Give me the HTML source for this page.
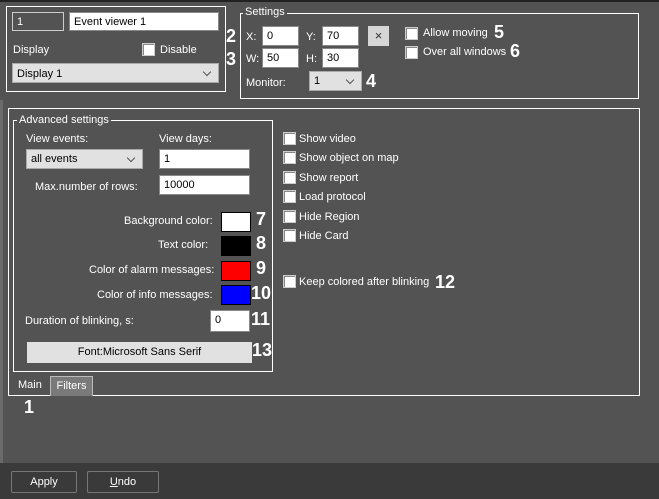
<!DOCTYPE html><html><head><style>
*{margin:0;padding:0;box-sizing:border-box}
body{width:659px;height:499px;background:#535353;font-family:"Liberation Sans",sans-serif;font-size:11px;color:#fff;position:relative;overflow:hidden}
.a{position:absolute}
.box{position:absolute;border:1px solid #fff}
.in{position:absolute;background:#fff;color:#000;border:1px solid #888;padding:2px 4px;font-size:11px;height:20px;line-height:15px}
.dd{position:absolute;background:#e1e1e1;color:#000;border:1px solid #aaa;padding:2px 4px;font-size:11px;line-height:15px}
.dd:after{content:"";position:absolute;right:8px;top:5px;width:5px;height:5px;border-right:1px solid #555;border-bottom:1px solid #555;transform:rotate(45deg)}
.cb{position:absolute;width:13px;height:13px;background:#fff;border:1px solid #ccc;box-shadow:inset 1px 1px 0 #888}
.n{position:absolute;font-weight:bold;font-size:18px;color:#fff}
.lbl{position:absolute;background:#535353;padding:0 2px}
</style></head><body>
<div class="a" style="left:0;top:0;width:659px;height:2px;background:#222"></div>
<div class="a" style="left:0;top:100px;width:3px;height:363px;background:#6a6a6a"></div>
<div class="box" style="left:6px;top:6px;width:220px;height:86px"></div>
<div class="in" style="left:12px;top:12px;width:52px;height:19px;background:#535353;color:#fff;border:1px solid #ccc">1</div>
<div class="in" style="left:69px;top:12px;width:150px;height:19px">Event viewer 1</div>
<div class="a" style="left:13px;top:44px">Display</div>
<div class="cb" style="left:142px;top:43px"></div>
<div class="a" style="left:160px;top:44px">Disable</div>
<div class="dd" style="left:12px;top:63px;width:207px;height:20px;padding-top:3px">Display 1</div>
<div class="box" style="left:240px;top:13px;width:399px;height:86px"></div>
<div class="lbl" style="left:243px;top:6px">Settings</div>
<div class="n" style="left:226px;top:26px">2</div>
<div class="n" style="left:226px;top:49px">3</div>
<div class="a" style="left:246px;top:31px">X:</div>
<div class="in" style="left:262px;top:26px;width:37px">0</div>
<div class="a" style="left:306px;top:31px">Y:</div>
<div class="in" style="left:322px;top:26px;width:37px">70</div>
<div class="a" style="left:368px;top:26px;width:21px;height:20px;background:#d6d6d6;color:#333;text-align:center;line-height:20px;font-size:13px">×</div>
<div class="a" style="left:246px;top:53px">W:</div>
<div class="in" style="left:262px;top:48px;width:37px">50</div>
<div class="a" style="left:306px;top:53px">H:</div>
<div class="in" style="left:322px;top:48px;width:37px">30</div>
<div class="a" style="left:246px;top:77px">Monitor:</div>
<div class="dd" style="left:309px;top:71px;width:53px;height:20px">1</div>
<div class="n" style="left:366px;top:71px">4</div>
<div class="cb" style="left:405px;top:27px"></div><div class="a" style="left:423px;top:27px">Allow moving</div><div class="n" style="left:494px;top:22px">5</div>
<div class="cb" style="left:405px;top:46px"></div><div class="a" style="left:423px;top:46px">Over all windows</div><div class="n" style="left:510px;top:41px">6</div>
<div class="box" style="left:8px;top:108px;width:632px;height:288px"></div>
<div class="box" style="left:13px;top:120px;width:260px;height:252px"></div>
<div class="lbl" style="left:17px;top:114px">Advanced settings</div>
<div class="a" style="left:26px;top:133px">View events:</div>
<div class="a" style="left:159px;top:133px">View days:</div>
<div class="dd" style="left:26px;top:149px;width:117px;height:20px">all events</div>
<div class="in" style="left:159px;top:149px;width:91px">1</div>
<div class="a" style="left:35px;top:181px">Max.number of rows:</div>
<div class="in" style="left:159px;top:175px;width:91px">10000</div>
<div class="a" style="left:124px;top:215px">Background color:</div>
<div class="a" style="left:221px;top:212px;width:30px;height:20px;background:#fff;border:1px solid #000"></div><div class="n" style="left:256px;top:209px">7</div>
<div class="a" style="left:158px;top:239px">Text color:</div>
<div class="a" style="left:221px;top:236px;width:30px;height:20px;background:#000"></div><div class="n" style="left:256px;top:233px">8</div>
<div class="a" style="left:89px;top:264px">Color of alarm messages:</div>
<div class="a" style="left:221px;top:261px;width:30px;height:20px;background:#f00;border:1px solid #000"></div><div class="n" style="left:256px;top:258px">9</div>
<div class="a" style="left:97px;top:289px">Color of info messages:</div>
<div class="a" style="left:221px;top:285px;width:30px;height:20px;background:#00f;border:1px solid #000"></div><div class="n" style="left:251px;top:283px">10</div>
<div class="a" style="left:25px;top:315px">Duration of blinking, s:</div>
<div class="in" style="left:210px;top:310px;width:40px;height:22px">0</div><div class="n" style="left:251px;top:309px">11</div>
<div class="a" style="left:27px;top:342px;width:225px;height:21px;background:#e1e1e1;color:#000;text-align:center;line-height:21px">Font:Microsoft Sans Serif</div><div class="n" style="left:252px;top:340px">13</div>
<div class="cb" style="left:283px;top:132px"></div><div class="a" style="left:299px;top:133px">Show video</div>
<div class="cb" style="left:283px;top:151px"></div><div class="a" style="left:299px;top:152px">Show object on map</div>
<div class="cb" style="left:283px;top:171px"></div><div class="a" style="left:299px;top:172px">Show report</div>
<div class="cb" style="left:283px;top:190px"></div><div class="a" style="left:299px;top:191px">Load protocol</div>
<div class="cb" style="left:283px;top:210px"></div><div class="a" style="left:299px;top:211px">Hide Region</div>
<div class="cb" style="left:283px;top:229px"></div><div class="a" style="left:299px;top:230px">Hide Card</div>
<div class="cb" style="left:283px;top:275px"></div><div class="a" style="left:299px;top:276px">Keep colored after blinking</div><div class="n" style="left:435px;top:272px">12</div>
<div class="a" style="left:18px;top:379px">Main</div>
<div class="a" style="left:50px;top:376px;width:43px;height:20px;background:#7a7a7a;border:1px solid #bbb;border-bottom:none;text-align:center;line-height:19px">Filters</div>
<div class="n" style="left:24px;top:397px">1</div>
<div class="a" style="left:0;top:463px;width:659px;height:36px;background:#3b3a3a"></div>
<div class="a" style="left:11px;top:471px;width:66px;height:22px;border:1px solid #777;border-radius:2px;text-align:center;line-height:20px">Apply</div>
<div class="a" style="left:87px;top:471px;width:72px;height:22px;border:1px solid #777;border-radius:2px;text-align:center;line-height:20px"><u>U</u>ndo</div>
</body></html>
